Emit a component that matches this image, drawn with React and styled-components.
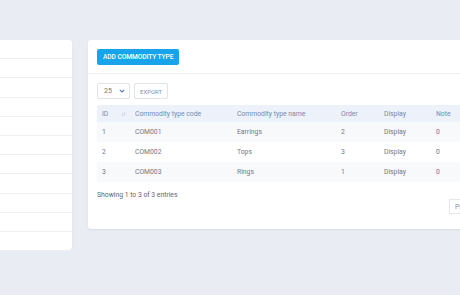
import React from 'react';
import styled, { createGlobalStyle } from 'styled-components';

const GlobalStyle = createGlobalStyle`
  body {
    margin: 0;
    background: #e9ecf2;
    font-family: Roboto, "Liberation Sans", sans-serif;
    overflow: hidden;
  }
`;

const Layout = styled.div`
  display: flex;
  align-items: flex-start;
  gap: 16px;
  padding-top: 40px;
  margin-left: -148px;
  width: 900px;
`;

const SideList = styled.ul`
  list-style: none;
  margin: 0;
  padding: 0;
  width: 220px;
  flex: none;
  background: #fff;
  border-radius: 3px;
  box-shadow: 0 1px 2px rgba(40, 50, 80, 0.08);
`;

const SideItem = styled.li`
  height: 18.2px;
  border-bottom: 1px solid #eef0f4;
  &:last-child {
    border-bottom: none;
  }
`;

const Card = styled.section`
  width: 448px;
  flex: none;
  background: #fff;
  border-radius: 3px;
  box-shadow: 0 1px 2px rgba(40, 50, 80, 0.08);
  padding-bottom: 15px;
`;

const CardHead = styled.div`
  display: flex;
  padding: 9px 9px 8px;
  border-bottom: 1px solid #eef0f4;
`;

const PrimaryButton = styled.button`
  height: 16px;
  padding: 0 6px;
  border: none;
  border-radius: 2px;
  background: #17a4eb;
  color: #fff;
  font-family: inherit;
  font-size: 6.7px;
  font-weight: 500;
  text-transform: uppercase;
  letter-spacing: -0.1px;
`;

const CardBody = styled.div`
  padding: 9px 9px 0;
`;

const Toolbar = styled.div`
  display: flex;
  gap: 4px;
  margin-bottom: 6px;
`;

const Select = styled.div`
  display: flex;
  align-items: center;
  justify-content: space-between;
  box-sizing: border-box;
  width: 33px;
  height: 16px;
  padding: 0 4px 0 6px;
  border: 1px solid #dfe3ea;
  border-radius: 2px;
  color: #6c757d;
  font-size: 7px;
`;

const OutlineButton = styled.button`
  box-sizing: border-box;
  height: 16px;
  padding: 0 5px;
  border: 1px solid #dfe3ea;
  border-radius: 2px;
  background: #fff;
  color: #8a93a3;
  font-family: inherit;
  font-size: 6px;
  text-transform: uppercase;
`;

const Table = styled.table`
  width: 100%;
  table-layout: fixed;
  border-collapse: collapse;
  font-size: 6.8px;
`;

const HeadCell = styled.th`
  box-sizing: border-box;
  height: 17px;
  padding: 0 5px;
  text-align: left;
  font-weight: 400;
  color: #7689ad;
  background: #edf2fa;
  white-space: nowrap;
  width: ${p => (p.w ? `${p.w}px` : 'auto')};
`;

const SortIcon = styled.span`
  float: right;
  color: #8fa2c6;
  font-size: 6px;
  letter-spacing: -1px;
`;

const Row = styled.tr`
  height: 20px;
  background: ${p => (p.striped ? '#f8f9fb' : '#fff')};
`;

const Cell = styled.td`
  padding: 0 5px;
  color: #737881;
  white-space: nowrap;
`;

const Footer = styled.div`
  display: flex;
  justify-content: space-between;
  align-items: flex-start;
  padding-top: 9px;
`;

const Info = styled.div`
  font-size: 6.8px;
  color: #5f6570;
`;

const Pager = styled.div`
  display: flex;
  margin-top: 8px;
`;

const PageButton = styled.button`
  height: 15px;
  padding: 0 5px;
  border: 1px solid #e3e6eb;
  background: #fff;
  color: #8a93a3;
  font-family: inherit;
  font-size: 6.8px;
  margin-left: -1px;
`;

const rows = [
  { id: 1, code: 'COM001', name: 'Earrings', order: 2 },
  { id: 2, code: 'COM002', name: 'Tops', order: 3 },
  { id: 3, code: 'COM003', name: 'Rings', order: 1 },
];

export default function App() {
  return (
    <>
      <GlobalStyle />
      <Layout>
        <SideList>
          {Array.from({ length: 11 }).map((_, i) => (
            <SideItem key={i} />
          ))}
        </SideList>
        <Card>
          <CardHead>
            <PrimaryButton>Add commodity type</PrimaryButton>
          </CardHead>
          <CardBody>
            <Toolbar>
              <Select>
                <span>25</span>
                <svg width="6" height="4" viewBox="0 0 6 4">
                  <path d="M0.8 0.8 L3 3 L5.2 0.8" fill="none" stroke="#5a7ab8" strokeWidth="1.1" />
                </svg>
              </Select>
              <OutlineButton>Export</OutlineButton>
            </Toolbar>
            <Table>
              <thead>
                <tr>
                  <HeadCell w={33}>
                    ID<SortIcon>↓↑</SortIcon>
                  </HeadCell>
                  <HeadCell w={102}>Commodity type code</HeadCell>
                  <HeadCell w={104}>Commodity type name</HeadCell>
                  <HeadCell w={43}>Order</HeadCell>
                  <HeadCell w={52}>Display</HeadCell>
                  <HeadCell w={50}>Note</HeadCell>
                  <HeadCell>Action</HeadCell>
                </tr>
              </thead>
              <tbody>
                {rows.map((r, i) => (
                  <Row key={r.id} striped={i % 2 === 0}>
                    <Cell>{r.id}</Cell>
                    <Cell>{r.code}</Cell>
                    <Cell>{r.name}</Cell>
                    <Cell>{r.order}</Cell>
                    <Cell>Display</Cell>
                    <Cell>0</Cell>
                    <Cell />
                  </Row>
                ))}
              </tbody>
            </Table>
            <Footer>
              <Info>Showing 1 to 3 of 3 entries</Info>
              <Pager>
                <PageButton>Previous</PageButton>
                <PageButton>1</PageButton>
                <PageButton>Next</PageButton>
              </Pager>
            </Footer>
          </CardBody>
        </Card>
      </Layout>
    </>
  );
}
